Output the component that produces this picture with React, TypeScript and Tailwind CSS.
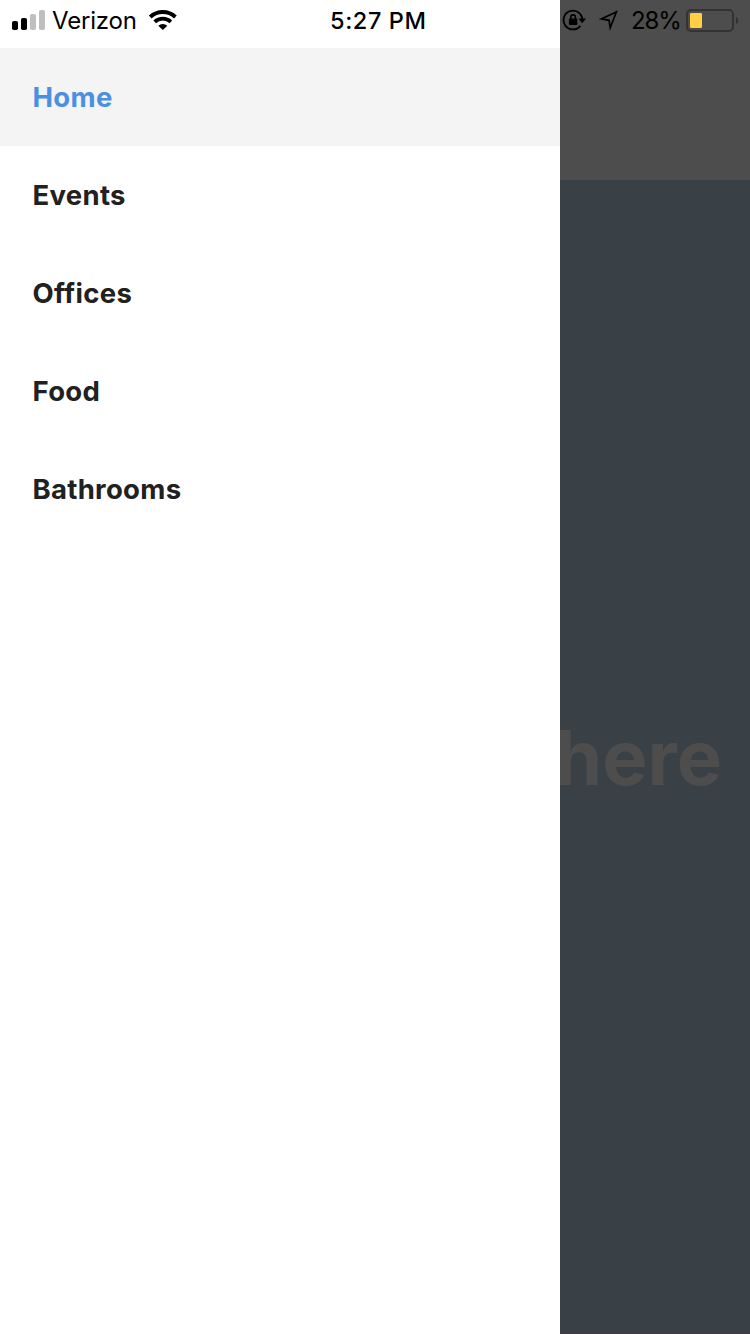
const items = [
  { label: 'Home', active: true },
  { label: 'Events', active: false },
  { label: 'Offices', active: false },
  { label: 'Food', active: false },
  { label: 'Bathrooms', active: false },
];

function SignalBars() {
  return (
    <svg className="h-[22px] w-[34px] shrink-0" viewBox="0 0 34 22">
      <rect x="0" y="12" width="6" height="9" rx="1.8" fill="#000" />
      <rect x="9" y="9" width="6" height="12" rx="1.8" fill="#000" />
      <rect x="18" y="5" width="6" height="16" rx="1.8" fill="#bfbfbf" />
      <rect x="27" y="1" width="6" height="20" rx="1.8" fill="#bfbfbf" />
    </svg>
  );
}

function WifiIcon() {
  return (
    <svg className="h-[22px] w-[30px] shrink-0" viewBox="0 0 30 22" fill="none" stroke="#000">
      <path d="M2.2 8A18.4 18.4 0 0 1 27.4 8" strokeWidth="3.9" />
      <path d="M6.7 12.9A11.8 11.8 0 0 1 22.9 12.9" strokeWidth="3.7" />
      <path d="M14.8 21L10.3 16.7A6.6 6.6 0 0 1 19.3 16.7Z" fill="#000" stroke="none" />
    </svg>
  );
}

function RotationLockIcon() {
  return (
    <svg className="h-[24px] w-[26px] shrink-0" viewBox="0 0 26 24" fill="none" stroke="#000">
      <path d="M18.3 16.9A9.4 9.4 0 1 1 20.3 10" strokeWidth="1.8" />
      <path d="M16.4 9.6H24L20.2 14.3Z" fill="#000" stroke="none" />
      <rect x="6.9" y="9.6" width="8.4" height="6.4" rx="0.9" fill="#000" stroke="none" />
      <path d="M8.8 10.2V8.2A2.3 2.3 0 0 1 13.4 8.2V10.2" strokeWidth="1.6" />
    </svg>
  );
}

function LocationIcon() {
  return (
    <svg className="h-[22px] w-[20px] shrink-0" viewBox="0 0 20 22" fill="none" stroke="#000">
      <path d="M2.2 9.9L17.4 3L11.2 18.8L10.1 11.3Z" strokeWidth="1.7" strokeLinejoin="miter" />
    </svg>
  );
}

function BatteryIcon() {
  return (
    <svg className="h-[24px] w-[54px] shrink-0" viewBox="0 0 54 24">
      <rect x="1" y="1" width="46" height="21" rx="4" fill="none" stroke="#333" strokeWidth="2" />
      <rect x="4" y="4" width="12" height="15" rx="1.2" fill="#ffd043" />
      <path d="M50 8C53 8.8 53 14.2 50 15Z" fill="#333" />
    </svg>
  );
}

export default function App() {
  return (
    <div className="flex h-[1334px] w-[750px] overflow-hidden font-['Inter','Liberation_Sans',sans-serif]">
      <aside className="flex w-[560px] shrink-0 flex-col bg-white">
        <header className="flex h-12 items-start pt-[9px] pl-3 text-black">
          <SignalBars />
          <span className="ml-[6px] w-[84px] text-[24px] leading-6 tracking-[-0.2px] whitespace-nowrap">Verizon</span>
          <span className="ml-3">
            <WifiIcon />
          </span>
          <time className="ml-[152px] text-[23.5px] leading-6 font-medium tracking-[0.6px] whitespace-nowrap">5:27 PM</time>
        </header>
        <nav className="flex flex-col">
          {items.map((item) => (
            <a
              key={item.label}
              className={`flex h-[98px] items-center pl-[32.5px] text-[27.5px] leading-[34px] font-bold tracking-[0.3px] ${
                item.active ? 'bg-[#f4f4f4] text-[#4a90e2]' : 'text-[#212121]'
              }`}
            >
              {item.label}
            </a>
          ))}
        </nav>
      </aside>
      <main className="flex min-w-0 flex-1 flex-col overflow-hidden bg-[#394046]">
        <header className="flex h-[180px] shrink-0 items-start bg-[#4d4d4d] pt-[9px] pl-[2px] text-black">
          <RotationLockIcon />
          <span className="ml-[11px]">
            <LocationIcon />
          </span>
          <span className="ml-3 w-[50px] text-[24px] leading-6 tracking-[-1.1px] whitespace-nowrap">28%</span>
          <span className="ml-[5px]">
            <BatteryIcon />
          </span>
        </header>
        <div className="flex flex-1 items-center justify-end pt-[2px] pr-[28px]">
          <h1 className="text-[76px] leading-none font-bold whitespace-nowrap text-[#4d4d4d]">here</h1>
        </div>
        <div className="h-[2px] bg-[#3d3b48]" />
      </main>
    </div>
  );
}
